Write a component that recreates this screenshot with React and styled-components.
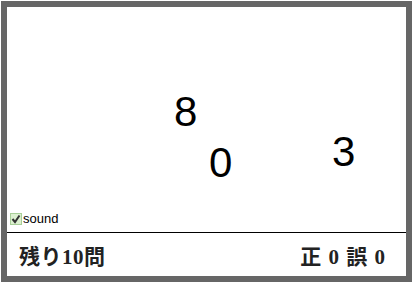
import React, { useState } from 'react'
import styled, { createGlobalStyle } from 'styled-components'

const Global = createGlobalStyle`
    html, body {
        margin: 0;
        padding: 0;
        background: #fff;
    }
`

const Frame = styled.div`
    box-sizing: border-box;
    margin: 1px 1px 0 1px;
    height: 281px;
    border: 6px solid #666;
    display: flex;
    flex-direction: column;
    background: #fff;
`

const Board = styled.div`
    position: relative;
    flex: 1;
    display: flex;
    align-items: flex-end;
    padding: 0 0 6px 3px;
    border-bottom: 1px solid #000;
`

const Digit = styled.span`
    position: absolute;
    left: ${p => p.x}px;
    top: ${p => p.y}px;
    font-family: "Liberation Sans", Arial, sans-serif;
    font-size: 42px;
    line-height: 1;
    color: #000;
`

const Sound = styled.label`
    display: flex;
    align-items: center;
    gap: 1px;
    font-family: "Liberation Sans", Arial, sans-serif;
    font-size: 13px;
    color: #000;
    cursor: pointer;
`

const Box = styled.span`
    box-sizing: border-box;
    width: 12px;
    height: 12px;
    border: 1px solid #a8cf98;
    background: #dcf0d0;
    display: flex;
    align-items: center;
    justify-content: center;
`

const Footer = styled.div`
    height: 43px;
    display: flex;
    align-items: center;
    justify-content: space-between;
    padding: 0 21px 0 12px;
    font-family: "Liberation Serif", "Noto Sans CJK JP", serif;
    font-weight: bold;
    font-size: 21px;
    color: #222;
    white-space: pre;
`

const Remain = styled.span`
    letter-spacing: 0.5px;
`

const Score = styled.span`
    word-spacing: 2px;
`

const digits = [
    { n: 8, x: 167, y: 84 },
    { n: 0, x: 202, y: 135 },
    { n: 3, x: 325, y: 124 },
]

export default function App() {
    const [sound, setSound] = useState(true)
    return (
        <>
            <Global />
            <Frame>
                <Board>
                    {digits.map(d => <Digit key={d.n} x={d.x} y={d.y}>{d.n}</Digit>)}
                    <Sound onClick={() => setSound(!sound)}>
                        <Box>
                            {sound &&
                                <svg width="10" height="10" viewBox="0 0 10 10">
                                    <path d="M1.5 5 L4 8 L8.5 1.5" fill="none" stroke="#333" strokeWidth="2" />
                                </svg>
                            }
                        </Box>
                        sound
                    </Sound>
                </Board>
                <Footer>
                    <Remain>残り10問</Remain>
                    <Score>正 0 誤 0</Score>
                </Footer>
            </Frame>
        </>
    )
}
